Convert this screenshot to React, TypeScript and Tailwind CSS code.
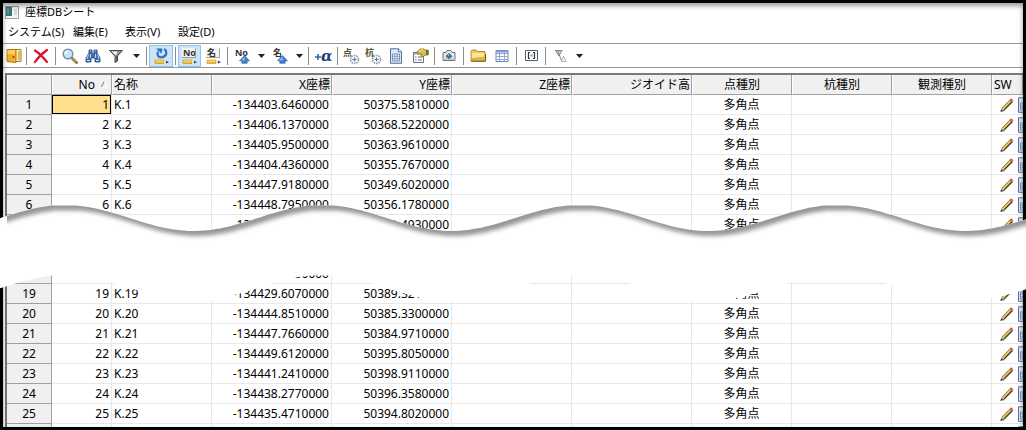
import type { ReactNode } from "react";

type Point = { no: number; x: string; y: string };

const upperRows: Point[] = [
  { no: 1, x: "-134403.6460000", y: "50375.5810000" },
  { no: 2, x: "-134406.1370000", y: "50368.5220000" },
  { no: 3, x: "-134405.9500000", y: "50363.9610000" },
  { no: 4, x: "-134404.4360000", y: "50355.7670000" },
  { no: 5, x: "-134447.9180000", y: "50349.6020000" },
  { no: 6, x: "-134448.7950000", y: "50356.1780000" },
  { no: 7, x: "-134450.1200000", y: "50361.4930000" },
];

const lowerRows: Point[] = [
  { no: 18, x: "-134426.7930000", y: "50391.2040000" },
  { no: 19, x: "-134429.6070000", y: "50389.3210000" },
  { no: 20, x: "-134444.8510000", y: "50385.3300000" },
  { no: 21, x: "-134447.7660000", y: "50384.9710000" },
  { no: 22, x: "-134449.6120000", y: "50395.8050000" },
  { no: 23, x: "-134441.2410000", y: "50398.9110000" },
  { no: 24, x: "-134438.2770000", y: "50396.3580000" },
  { no: 25, x: "-134435.4710000", y: "50394.8020000" },
];

/* ---------- icons ---------- */

function Svg({ children, w = 16, h = 16 }: { children: ReactNode; w?: number; h?: number }) {
  return (
    <svg width={w} height={h} viewBox={`0 0 ${w} ${h}`} className="block shrink-0" aria-hidden="true">
      {children}
    </svg>
  );
}

const DoorIcon = () => (
  <Svg>
    <path d="M2 1.5h13v12H2z" fill="#fff0b8" stroke="#a67c22" />
    <path d="M12 3h2v9h-2z" fill="#e8b545" />
    <path d="M1 1.500h9v13l-9-1z" fill="#f4ae2c" stroke="#b07612" />
    <path d="M1.500 2h7.500v4H1.500z" fill="#ffcf66" />
    <circle cx="7.500" cy="9" r="1" fill="#6b4506" />
  </Svg>
);

const CrossIcon = () => (
  <Svg>
    <path d="M2 2.5C6 5 10 9 14 14M14 2C9 5.500 5 9.500 2 14" fill="none" stroke="#dd1232" strokeWidth="2.200" strokeLinecap="round" />
  </Svg>
);

const SearchIcon = () => (
  <Svg>
    <path d="M10 10l4.500 4.500" stroke="#8c7a3c" strokeWidth="3" strokeLinecap="round" />
    <path d="M10.500 9.800l4 4" stroke="#e0c878" strokeWidth="1" />
    <circle cx="6" cy="6" r="4.800" fill="#c4e4fa" stroke="#6f8fb0" strokeWidth="1.400" />
    <path d="M3.300 6a3 3 0 0 1 3-3" fill="none" stroke="#fff" strokeWidth="1.500" />
  </Svg>
);

const BinocularsIcon = () => (
  <Svg>
    <path d="M4 2h3v3l1 1 1-1V2h3v3l3 5v4h-5v-4H6v4H1v-4l3-5z" fill="#3f6bb0" stroke="#254880" strokeWidth=".8" />
    <path d="M3.500 6.500L2 11M5.500 6v4M10.500 6v4M12.500 6.500L14 11" stroke="#bcd4f2" strokeWidth="1" />
    <path d="M2 12.500h3M11 12.500h3" stroke="#d5e4f7" />
    <path d="M5 3h1M10 3h1" stroke="#bcd4f2" />
  </Svg>
);

const FilterIcon = () => (
  <Svg>
    <path d="M1.500 2.500h13L9.500 8v5L7 14.500V8z" fill="#8f8f8f" stroke="#4a4a4a" strokeLinejoin="round" />
    <path d="M3.500 3.500h6L8 7.500z" fill="#f2f2f2" />
    <path d="M9 8v5" stroke="#333" />
  </Svg>
);

const Down = () => (
  <Svg w={7} h={4}>
    <path d="M0 0h7L3.500 4z" fill="#222" />
  </Svg>
);

const PencilBar = () => (
  <g>
    <path d="M2 13h9v3.500H2z" fill="#f1bd35" stroke="#c38b14" strokeWidth=".6" />
    <path d="M2.500 14h8" stroke="#fbe08a" />
    <path d="M11 12.700l4 2.300-4 2z" fill="#f3dfb8" />
    <path d="M13 13.800l3 1.500-3 1.200z" fill="#20368c" />
  </g>
);

const RotateEditIcon = () => (
  <Svg w={17} h={18}>
    <path d="M5 4.500C3.600 8.500 5.500 10.300 8.300 10.300c3 0 5.200-2.100 5-4.800-.1-1.600-.9-2.700-2-3.500" fill="none" stroke="#2f6fc0" strokeWidth="2.200" />
    <path d="M3 1.500h6.500L8.500 6.500z" fill="#2f6fc0" />
    <PencilBar />
  </Svg>
);

const label = "font-['Noto_Sans','Noto_Sans_CJK_JP',sans-serif] font-bold";

const LabelEditIcon = ({ text }: { text: string }) => (
  <Svg w={17} h={18}>
    <path d="M1 1h13v9H1z" fill="#f4f4f4" />
    <text x="2" y="9" fontSize="9" fill="#333" className={label}>{text}</text>
    <path d="M1 10.500h13.500V1.500" fill="none" stroke="#888" strokeWidth=".8" />
    <PencilBar />
  </Svg>
);

const LabelUpIcon = ({ text }: { text: string }) => (
  <Svg w={17} h={18}>
    <text x="1" y="9" fontSize="9" fill="#333" className={label}>{text}</text>
    <path d="M10.500 8.500l5 5.300h-2.300v2.500H7.800v-2.500H5.500z" fill="#3f83cf" stroke="#2a5d9e" strokeWidth=".6" />
    <path d="M10.500 10l-3 3.300h3z" fill="#a9cdf2" />
  </Svg>
);

const AlphaIcon = () => (
  <Svg w={18} h={16}>
    <path d="M1 9h6M4 6v6" stroke="#2c6bb5" strokeWidth="1.600" />
    <text x="7" y="12.500" fontSize="15" fill="#1d3f78" className="font-['DejaVu_Serif',serif] font-bold italic">α</text>
  </Svg>
);

const LabelGearIcon = ({ text }: { text: string }) => (
  <Svg w={17} h={18}>
    <text x="0" y="9" fontSize="9" fill="#55502c" className={label}>{text}</text>
    <circle cx="11.500" cy="12.500" r="4" fill="#f4f6f8" stroke="#8f96a0" strokeWidth="1.600" strokeDasharray="1.600 .9" />
    <path d="M9.500 12.500h4M11.500 10.500v4" stroke="#3f78c0" />
  </Svg>
);

const SheetIcon = () => (
  <Svg w={14} h={16}>
    <path d="M1.500.8h8l3 3v11.500h-11z" fill="#dce8f8" stroke="#5470a0" />
    <path d="M9.500.8v3h3" fill="#fff" stroke="#5470a0" />
    <path d="M3.500 6h7v7h-7z" fill="#fff" stroke="#6f8aba" strokeWidth=".9" />
    <path d="M3.500 8.300h7M3.500 10.700h7M5.800 6v7M8.200 6v7" stroke="#6f8aba" strokeWidth=".8" />
  </Svg>
);

const PropertiesIcon = () => (
  <Svg w={17} h={16}>
    <path d="M1.500 4.500h10v10h-10z" fill="#fff" stroke="#69707c" />
    <path d="M2 5h9v1.500H2z" fill="#91aed6" />
    <path d="M3 9h1.500M6 9h4M3 12h1.500M6 12h4" stroke="#51709d" />
    <path d="M5 4l3-3h4l1 1h3v5h-3l-2 2-2-1 1-2H6z" fill="#e8bd3d" stroke="#8a6810" strokeWidth=".8" />
    <path d="M7 3l2-1h2" stroke="#fff0a4" fill="none" />
    <path d="M14 2h2.500v5H14z" fill="#4b7a45" />
  </Svg>
);

const CameraIcon = () => (
  <Svg w={14} h={13}>
    <path d="M1 3.500h3l1-2h4l1 2h3v8H1z" fill="#e5e7ea" stroke="#6d7278" />
    <path d="M1.500 9h11v2h-11z" fill="#c8cdd4" />
    <path d="M7 4.300l3 3-3 2.400-3-2.400z" fill="#2d7f8e" stroke="#36516b" strokeWidth=".6" />
    <path d="M6 6h1" stroke="#bdf0f4" />
  </Svg>
);

const FolderIcon = () => (
  <Svg>
    <path d="M1 3.500l1-1.500h4l1.500 1.500H15V13H1z" fill="#eac75c" stroke="#9c7a1c" strokeWidth=".8" />
    <path d="M1 13L3 6h12.500v7z" fill="#dfb543" />
    <path d="M1.800 5h12.400v3.500L1.800 10z" fill="#fbe79b" />
    <path d="M1 13.200h14.500V6" stroke="#6f5208" fill="none" />
  </Svg>
);

const GridIcon = () => (
  <Svg w={14} h={14}>
    <path d="M1 1.500h12v11H1z" fill="#fff" stroke="#6a84ba" />
    <path d="M1 1.500h12v2H1z" fill="#7f9dd3" />
    <path d="M1 4.500h12M1 7.500h12M1 10.500h12M4.500 2v10.500M9.500 2v10.500" stroke="#90a5cf" />
  </Svg>
);

const BracketIcon = () => (
  <Svg w={13} h={13}>
    <path d="M.5 1.500h12v10H.5z" fill="#fff" stroke="#4f6078" />
    <path d="M5 3.500H3.500v6H5M8 3.500h1.500v6H8" fill="none" stroke="#333" strokeWidth="1.200" />
    <path d="M5.500 5.500h2v2h-2z" fill="#888" />
  </Svg>
);

const TrianglesIcon = () => (
  <Svg w={13} h={14}>
    <path d="M1.500 1.500h6.500L4.800 7z" fill="#d8d8d8" stroke="#777" strokeWidth=".9" />
    <path d="M4 2l3.500 10" stroke="#888" />
    <path d="M9.500 7l2.800 5.500h-5z" fill="#f0f0f0" stroke="#aaa" strokeWidth=".9" />
  </Svg>
);

const PencilIcon = () => (
  <Svg w={14} h={14}>
    <path d="M3 13l9.500-9.500" stroke="#333" strokeWidth="1.200" />
    <path d="M2.500 11.300l8.500-8.800" stroke="#80641c" strokeWidth="2.800" />
    <path d="M2.800 11l8.200-8.500" stroke="#ecd468" strokeWidth="1.500" />
    <path d="M10.500 3l1.800-1.800" stroke="#d45a4c" strokeWidth="3" />
    <path d="M.3 13.900l1-3 2.200 2z" fill="#333" />
    <path d="M1.400 10.800l2 1.900.9-.9-2-1.900z" fill="#c9b3a0" />
  </Svg>
);

const AppIcon = () => (
  <Svg w={14} h={13}>
    <path d="M.5.5h13v12H.5z" fill="#f4f6f6" stroke="#98a0a4" />
    <path d="M1 1h6v9H1z" fill="#3b7a6e" />
    <path d="M2 2h2v6H2z" fill="#5f90b0" />
    <path d="M9 3h3v6H9z" fill="#d5dbe0" />
  </Svg>
);

/* ---------- toolbar ---------- */

function Tool({ name, w, on = false, children }: { name: string; w: string; on?: boolean; children: ReactNode }) {
  return (
    <button
      type="button"
      aria-label={name}
      aria-pressed={on ? true : undefined}
      className={`flex h-[22px] shrink-0 items-center justify-center ${w} ${on ? "border border-[#8fc3ee] bg-[#cce4f8]" : ""}`}
    >
      {children}
    </button>
  );
}

const Sep = () => <span className="mx-0.5 h-[18px] w-px shrink-0 bg-[#8c8c8c]" />;

function Toolbar() {
  return (
    <div role="toolbar" className="flex h-[25px] shrink-0 items-center border-y border-[#969696]">
      <Tool name="閉じる" w="w-[21px]"><DoorIcon /></Tool>
      <Sep />
      <Tool name="削除" w="w-6"><CrossIcon /></Tool>
      <Sep />
      <Tool name="検索" w="w-6"><SearchIcon /></Tool>
      <Tool name="一覧検索" w="w-[22px]"><BinocularsIcon /></Tool>
      <Tool name="フィルター" w="w-6"><FilterIcon /></Tool>
      <Tool name="フィルターの選択" w="w-4"><Down /></Tool>
      <Sep />
      <Tool name="再計算編集" w="w-6" on><RotateEditIcon /></Tool>
      <Sep />
      <Tool name="番号編集" w="w-[23px]" on><LabelEditIcon text="No" /></Tool>
      <Tool name="名称編集" w="w-6"><LabelEditIcon text="名" /></Tool>
      <Sep />
      <Tool name="番号で並べ替え" w="w-6"><LabelUpIcon text="No" /></Tool>
      <Tool name="番号の並べ替え方法" w="w-[14px]"><Down /></Tool>
      <Tool name="名称で並べ替え" w="w-6"><LabelUpIcon text="名" /></Tool>
      <Tool name="名称の並べ替え方法" w="w-[14px]"><Down /></Tool>
      <Sep />
      <Tool name="加算" w="w-6"><AlphaIcon /></Tool>
      <Sep />
      <Tool name="点の設定" w="w-[22px]"><LabelGearIcon text="点" /></Tool>
      <Tool name="杭の設定" w="w-[22px]"><LabelGearIcon text="杭" /></Tool>
      <Tool name="計算書" w="w-6"><SheetIcon /></Tool>
      <Tool name="プロパティ" w="w-6"><PropertiesIcon /></Tool>
      <Sep />
      <Tool name="写真" w="w-6"><CameraIcon /></Tool>
      <Sep />
      <Tool name="フォルダー" w="w-6"><FolderIcon /></Tool>
      <Tool name="表" w="w-6"><GridIcon /></Tool>
      <Sep />
      <Tool name="範囲" w="w-6"><BracketIcon /></Tool>
      <Sep />
      <Tool name="並び順" w="w-6"><TrianglesIcon /></Tool>
      <Tool name="並び順の選択" w="w-[14px]"><Down /></Tool>
    </div>
  );
}

/* ---------- table ---------- */

const head = "h-5 border-r border-b border-[#a0a0a0] border-l border-l-white bg-[#f0f0f0] px-px font-normal";
const cell = "h-5 border-r border-b border-[#e8e8e8] px-0.5";
const rowHead = "h-5 border-r border-b border-[#a0a0a0] bg-[#f0f0f0] text-center font-normal";

function ActionsCell({ name }: { name: string }) {
  return (
    <td className="h-5 overflow-hidden border-b border-[#e8e8e8] pl-2">
      <div className="flex items-center gap-[3px]">
        <button type="button" aria-label={`${name} を編集`} className="shrink-0"><PencilIcon /></button>
        <button type="button" aria-label={`${name} の計算書`} className="shrink-0"><SheetIcon /></button>
      </div>
    </td>
  );
}

function Row({ p }: { p: Point }) {
  return (
    <tr>
      <th scope="row" className={rowHead}>{p.no}</th>
      <td className={`${cell} text-right ${p.no === 1 ? "bg-[#ffdf8c] shadow-[inset_0_0_0_1px_#000]" : ""}`}>{p.no}</td>
      <td className={cell}>K.{p.no}</td>
      <td className={`${cell} text-right`}>{p.x}</td>
      <td className={`${cell} text-right`}>{p.y}</td>
      <td className={cell} />
      <td className={cell} />
      <td className={`${cell} text-center`}>多角点</td>
      <td className={cell} />
      <td className={cell} />
      <ActionsCell name={`K.${p.no}`} />
    </tr>
  );
}

function NewRow() {
  return (
    <tr>
      <th scope="row" className={rowHead} />
      {[1, 2, 3, 4, 5, 6, 7, 8, 9].map((n) => <td key={n} className={cell} />)}
      <ActionsCell name="新しい点" />
    </tr>
  );
}

function PointTable() {
  return (
    <table className="w-full table-fixed border-separate border-spacing-0 text-[12px] leading-4 whitespace-nowrap">
      <colgroup>
        <col className="w-[45px]" />
        <col className="w-[60px]" />
        <col className="w-[100px]" />
        <col className="w-[120px]" />
        <col className="w-[120px]" />
        <col className="w-[120px]" />
        <col className="w-[120px]" />
        <col className="w-[100px]" />
        <col className="w-[100px]" />
        <col className="w-[100px]" />
        <col />
      </colgroup>
      <thead>
        <tr>
          <td className={head} />
          <th scope="col" className={head}>
            <div className="flex items-center justify-end gap-1.5 pr-0.5">
              No
              <Svg w={7} h={7}>
                <path d="M0 6.500L3.500 0" stroke="#777" />
                <path d="M3.500 0L6.500 6.500H0" fill="none" stroke="#fff" />
              </Svg>
            </div>
          </th>
          <th scope="col" className={`${head} text-left`}>名称</th>
          <th scope="col" className={`${head} text-right`}>X座標</th>
          <th scope="col" className={`${head} text-right`}>Y座標</th>
          <th scope="col" className={`${head} text-right`}>Z座標</th>
          <th scope="col" className={`${head} text-right`}>ジオイド高</th>
          <th scope="col" className={`${head} text-center`}>点種別</th>
          <th scope="col" className={`${head} text-center`}>杭種別</th>
          <th scope="col" className={`${head} text-center`}>観測種別</th>
          <th scope="col" className={`${head} text-left`}>SW</th>
        </tr>
      </thead>
      <tbody>
        {upperRows.map((p) => <Row key={p.no} p={p} />)}
        <tr><td colSpan={11} className="h-[29px]" /></tr>
        {lowerRows.map((p) => <Row key={p.no} p={p} />)}
        <NewRow />
      </tbody>
    </table>
  );
}

/* ---------- torn band hiding the omitted rows ---------- */

function wave(base: number) {
  const pts: string[] = [];
  for (let x = -8; x <= 1034; x += 4) {
    const y = base - 13 * Math.cos((2 * Math.PI * (x - 65)) / 257.3);
    pts.push(`${x} ${Math.max(y, base - 12.5).toFixed(1)}`);
  }
  return pts;
}

function TornBand() {
  const top = wave(23);
  const bottom = wave(93);
  const band = `M${top.join("L")}L${[...bottom].reverse().join("L")}Z`;
  return (
    <svg
      className="pointer-events-none absolute inset-x-0 top-[195px] h-[115px] w-full"
      viewBox="0 0 1026 115"
      preserveAspectRatio="none"
      aria-hidden="true"
    >
      <defs>
        <clipPath id="band"><path d={band} /></clipPath>
        <filter id="soft" x="-5%" y="-50%" width="110%" height="200%"><feGaussianBlur stdDeviation="2" /></filter>
      </defs>
      <path d={band} fill="#fff" />
      <g clipPath="url(#band)">
        <path d={`M${top.join("L")}L1034 -10L10 -10Z`} fill="#969696" filter="url(#soft)" transform="translate(3 5)" />
        <path d="M0 0h7v60H0z" fill="#fff" />
      </g>
    </svg>
  );
}

export default function App() {
  return (
    <div className="relative flex h-screen flex-col overflow-hidden bg-black p-[3px] font-['Noto_Sans','Noto_Sans_CJK_JP',sans-serif] text-black">
      <div className="relative flex min-h-0 flex-1 flex-col overflow-hidden bg-white">
        <header className="flex h-[18px] shrink-0 items-center gap-[6px] pl-0.5 text-[11px] leading-4">
          <AppIcon />
          <h1>座標DBシート</h1>
        </header>
        <nav className="flex h-[22px] shrink-0 items-center pl-[5px] text-[11px] leading-4">
          <button type="button" className="w-[65px] text-left">システム(S)</button>
          <button type="button" className="w-[52px] text-left">編集(E)</button>
          <button type="button" className="w-[53px] text-left">表示(V)</button>
          <button type="button" className="w-[53px] text-left">設定(D)</button>
        </nav>
        <Toolbar />
        <main className="mt-[5px] ml-0.5 min-h-0 flex-1 overflow-hidden border-t-2 border-l-2 border-[#7a7a7a]">
          <PointTable />
        </main>
        <div className="pointer-events-none absolute inset-0 shadow-[inset_0_3px_5px_rgba(0,0,0,0.4)]" />
      </div>
      <TornBand />
    </div>
  );
}
